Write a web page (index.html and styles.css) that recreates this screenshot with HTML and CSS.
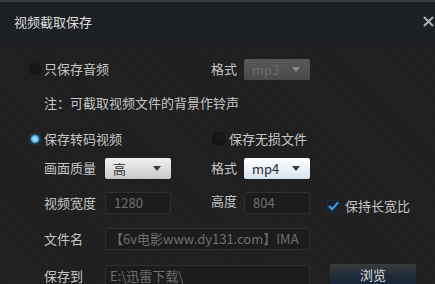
FILE: index.html
```html
<!DOCTYPE html>
<html lang="zh-CN">
<head>
    <meta charset="UTF-8">
    <title>视频截取保存</title>
    <link rel="stylesheet" href="styles.css">
</head>
<body>
    <div class="dialog">
        <div class="titlebar">
            <span class="title">视频截取保存</span>
            <span class="close">
                <svg width="11" height="11" viewBox="0 0 11 11">
                    <path d="M1 1 L10 10 M10 1 L1 10" stroke="#a9a9a9" stroke-width="2.2" fill="none"/>
                </svg>
            </span>
        </div>

        <div class="content">
            <!-- audio only -->
            <div class="row row-audio">
                <span class="radio"></span>
                <span class="radio-label wide">只保存音频</span>
                <span></span>
                <span class="label">格式</span>
                <div class="select disabled"><span>mp3</span><i class="arrow"></i></div>
            </div>

            <div class="row row-note">
                <span></span>
                <span class="note">注：可截取视频文件的背景作铃声</span>
            </div>

            <!-- transcode -->
            <div class="row row-mode">
                <span class="radio checked"></span>
                <span class="radio-label wide">保存转码视频</span>
                <span></span>
                <div class="option">
                    <span class="radio off"></span>
                    <span class="radio-label">保存无损文件</span>
                </div>
            </div>

            <div class="row row-quality">
                <span></span>
                <span class="label">画面质量</span>
                <div class="select light"><span>高</span><i class="arrow"></i></div>
                <span></span>
                <span class="label">格式</span>
                <div class="select blue"><span>mp4</span><i class="arrow"></i></div>
            </div>

            <div class="row row-size">
                <span></span>
                <span class="label">视频宽度</span>
                <div class="input">1280</div>
                <span></span>
                <span class="label up">高度</span>
                <div class="input">804</div>
                <span></span>
                <label class="check"><span class="box">
                    <svg width="11" height="10" viewBox="0 0 11 10">
                        <path d="M1 5 L4 8.2 L10 1.5" stroke="#3d93dc" stroke-width="2.4" fill="none"/>
                    </svg>
                </span>保持长宽比</label>
            </div>

            <div class="row row-file">
                <span></span>
                <span class="label">文件名</span>
                <div class="input long">【6v电影www.dy131.com】IMA</div>
            </div>

            <div class="row row-path">
                <span></span>
                <span class="label">保存到</span>
                <div class="input long">E:\迅雷下载\</div>
                <span></span>
                <div class="button">浏览</div>
            </div>
        </div>
    </div>
</body>
</html>
```

FILE: styles.css
```css
* {
    margin: 0;
    padding: 0;
    box-sizing: border-box;
}

body {
    background-color: #1e1e1e;
    font-family: "Noto Sans CJK SC", "Liberation Sans", sans-serif;
    font-size: 13px;
    color: #c9c9c9;
    overflow: hidden;
}

.dialog {
    width: 435px;
    height: 284px;
    overflow: hidden;
    background-color: #1f1f1f;
    background-image: repeating-linear-gradient(45deg, rgba(255, 255, 255, 0.012) 0 1px, transparent 1px 3px);
}

/* Title bar */
.titlebar {
    height: 44px;
    border-top: 2px solid #3a3b3d;
    background-color: #1c2025;
    display: flex;
    align-items: center;
    justify-content: space-between;
    padding: 0 1px 0 14px;
}

.title {
    color: #dcdcdc;
    font-size: 13px;
    margin-top: -3px;
}

.close {
    display: flex;
    margin-top: -4px;
}

/* Form rows */
.content {
    padding: 14px 0 0 29px;
}

.row {
    display: grid;
    grid-template-columns: 15px 61px 66px 40px 33px 66px 17px auto;
    align-items: center;
    height: 22px;
}

.row-note { margin-top: 12px; }
.row-mode { margin-top: 14px; }
.row-quality { margin-top: 7px; }
.row-size { margin-top: 13px; }
.row-file { margin-top: 14px; }
.row-path { margin-top: 14px; }

.label,
.radio-label,
.note {
    white-space: nowrap;
    color: #c6c6c6;
    line-height: 1.2;
}

.radio-label.wide {
    grid-column: span 2;
}

.note {
    grid-column: span 6;
}

.label.up {
    margin-top: -5px;
}

.option {
    grid-column: span 4;
    display: flex;
    align-items: center;
    gap: 3px;
    margin-left: 1px;
}

/* Radio buttons */
.radio {
    width: 12px;
    height: 12px;
    border-radius: 50%;
    background: radial-gradient(circle at 50% 45%, #1a1a1a, #0e0e0e);
    box-shadow: 0 0 1px #2b2b2b;
}

.radio.checked {
    width: 8px;
    height: 8px;
    margin-left: 2px;
    background: radial-gradient(circle, #c8ecff 0, #58b7f3 55%, #1f6fb0 100%);
    box-shadow: 0 0 3px 1px rgba(60, 150, 230, 0.55);
}

.radio.off {
    width: 14px;
    height: 14px;
}

/* Dropdowns */
.select {
    height: 21px;
    border-radius: 2px;
    display: flex;
    align-items: center;
    justify-content: space-between;
    padding: 0 10px 0 8px;
}

.select span {
    font-size: 13px;
    line-height: 1;
}

.select.light {
    background: linear-gradient(#f2f2f2, #c9c9c9);
    color: #333;
}

.select.blue {
    background: linear-gradient(#ffffff, #d6e3ef);
    color: #2a2a2a;
}

.select.disabled {
    background: linear-gradient(#585858, #4a4a4a);
    color: #6d6d6d;
}

.arrow {
    width: 0;
    height: 0;
    border-left: 4px solid transparent;
    border-right: 4px solid transparent;
    border-top: 5px solid #3a3a3a;
}

.select.disabled .arrow {
    border-top-color: #8a8a8a;
}

/* Text inputs */
.input {
    height: 22px;
    background-color: #1c1c1c;
    border: 1px solid #2f2f2f;
    border-radius: 2px;
    color: #6f6f6f;
    font-size: 13px;
    line-height: 20px;
    padding-left: 8px;
    white-space: nowrap;
    overflow: hidden;
}

.input.long {
    grid-column: span 4;
    padding-left: 4px;
}

/* Checkbox */
.check {
    display: flex;
    align-items: center;
    white-space: nowrap;
    color: #c6c6c6;
    line-height: 1.2;
    margin-top: 6px;
}

.box {
    width: 13px;
    height: 13px;
    background-color: #16202b;
    border: 1px solid #1e2a36;
    display: flex;
    align-items: center;
    justify-content: center;
    margin-right: 5px;
}

/* Browse button */
.button {
    width: 86px;
    height: 24px;
    margin-left: 3px;
    align-self: start;
    background: linear-gradient(#3a3a3a, #1d2a38 55%, #13243a);
    border-radius: 2px;
    color: #dedede;
    text-align: center;
    line-height: 22px;
}
```
